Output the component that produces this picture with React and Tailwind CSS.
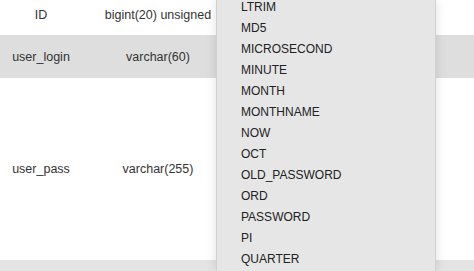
const functions = [
  "LTRIM",
  "MD5",
  "MICROSECOND",
  "MINUTE",
  "MONTH",
  "MONTHNAME",
  "NOW",
  "OCT",
  "OLD_PASSWORD",
  "ORD",
  "PASSWORD",
  "PI",
  "QUARTER",
];

const rows = [
  { name: "ID", type: "bigint(20) unsigned", h: "h-[41px] -mt-[6px]", bg: "bg-white" },
  { name: "user_login", type: "varchar(60)", h: "h-[43px]", bg: "bg-[#dedede]" },
  { name: "user_pass", type: "varchar(255)", h: "h-[182px]", bg: "bg-white" },
  { name: "", type: "", h: "h-[43px]", bg: "bg-[#e4e4e4]" },
];

export default function App() {
  return (
    <div
      className="relative w-[474px] h-[271px] overflow-hidden bg-white text-[12.5px] text-[#333]"
      style={{ fontFamily: '"Liberation Sans", Arial, sans-serif' }}
    >
      {/* Table */}
      <div className="flex flex-col">
        {rows.map((r, i) => (
          <div key={i} className={`flex items-center ${r.h} ${r.bg}`}>
            <div className="w-[82px] pt-[1px] text-center">{r.name}</div>
            <div className="w-[152px] pt-[1px] text-center">{r.type}</div>
            <div className="flex-1" />
          </div>
        ))}
      </div>

      {/* Function dropdown */}
      <div className="absolute left-[216px] top-0 w-[220px] h-[271px] overflow-hidden bg-[#e6e6e6] border-l border-r border-[#d2d2d2] shadow-[0_0_10px_rgba(0,0,0,0.12)]">
        <ul className="-mt-[3.5px] text-[12px] text-[#222]">
          {functions.map((f) => (
            <li key={f} className="h-[21px] leading-[21px] pl-[24px]">
              {f}
            </li>
          ))}
        </ul>
      </div>
    </div>
  );
}
